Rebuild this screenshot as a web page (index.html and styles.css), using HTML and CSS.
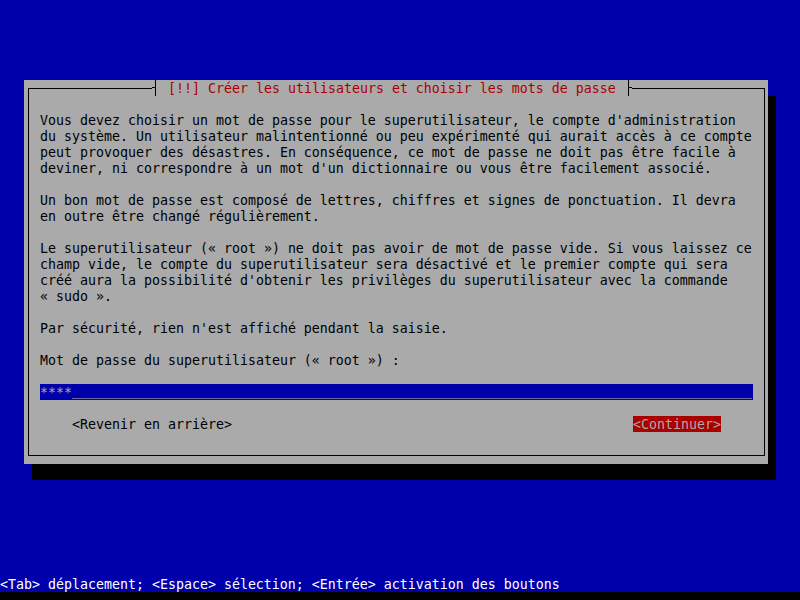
FILE: index.html
```html
<!DOCTYPE html>
<html>
    <head>
        <meta charset="UTF-8">
        <meta name="viewport" content="width=device-width, initial-scale=1.0">
        <title>Installation</title>
        <link rel="stylesheet" href="styles.css">
    </head>
    <body>
        <div id="screen">
            <div id="dialog">
                <fieldset id="frame">
                    <legend id="caption"><span class="tee tee-left"></span><span class="caption-text"> [!!] Créer les utilisateurs et choisir les mots de passe </span><span class="tee tee-right"></span></legend>
                    <p class="para">Vous devez choisir un mot de passe pour le superutilisateur, le compte d'administration
du système. Un utilisateur malintentionné ou peu expérimenté qui aurait accès à ce compte
peut provoquer des désastres. En conséquence, ce mot de passe ne doit pas être facile à
deviner, ni correspondre à un mot d'un dictionnaire ou vous être facilement associé.</p>
                    <p class="para">Un bon mot de passe est composé de lettres, chiffres et signes de ponctuation. Il devra
en outre être changé régulièrement.</p>
                    <p class="para">Le superutilisateur (« root ») ne doit pas avoir de mot de passe vide. Si vous laissez ce
champ vide, le compte du superutilisateur sera désactivé et le premier compte qui sera
créé aura la possibilité d'obtenir les privilèges du superutilisateur avec la commande
« sudo ».</p>
                    <p class="para">Par sécurité, rien n'est affiché pendant la saisie.</p>
                    <p class="para">Mot de passe du superutilisateur (« root ») :</p>
                    <div id="entry">****<span class="entry-fill">_____________________________________________________________________________________</span></div>
                    <div id="buttons">
                        <span class="btn">&lt;Revenir en arrière&gt;</span>
                        <span class="btn btn-active">&lt;Continuer&gt;</span>
                    </div>
                </fieldset>
            </div>
            <div id="helpline">&lt;Tab&gt; déplacement; &lt;Espace&gt; sélection; &lt;Entrée&gt; activation des boutons</div>
        </div>
    </body>
</html>
```

FILE: styles.css
```css
html, body {
    margin:0;
    padding:0;
}
body {
    background-color:#000;
    width:800px;
    height:600px;
    overflow:hidden;
    font-family:"DejaVu Sans Mono", monospace;
    font-size:13.29px;
    line-height:16px;
}
#screen {
    display:flex;
    flex-direction:column;
    height:592px;
    padding-top:80px;
    box-sizing:border-box;
    background-color:#0000aa;
}
#dialog {
    display:flex;
    flex-direction:column;
    width:744px;
    height:384px;
    margin-left:24px;
    padding:0 3px 8px 4px;
    box-sizing:border-box;
    background-color:#aaaaaa;
    box-shadow:8px 16px 0 #000;
    color:#000;
}
#frame {
    flex:1;
    margin:0;
    min-width:0;
    padding:16px 11px 0 11px;
    border:1px solid #000;
}
#caption {
    display:flex;
    padding:0;
    margin-left:112px;
    height:16px;
}
.tee {
    display:block;
    width:8px;
    height:16px;
}
.tee-left {
    background:
        linear-gradient(#000, #000) 3px 0 / 1px 16px no-repeat,
        linear-gradient(#000, #000) 0 7px / 3px 1px no-repeat;
}
.tee-right {
    background:
        linear-gradient(#000, #000) 4px 0 / 1px 16px no-repeat,
        linear-gradient(#000, #000) 4px 7px / 4px 1px no-repeat;
}
.caption-text {
    display:block;
    height:16px;
    padding-top:1px;
    box-sizing:border-box;
    white-space:pre;
    color:#aa0000;
}
.para {
    margin:0 0 15px 0;
    padding-top:1px;
    white-space:pre;
}
#entry {
    height:16px;
    padding-top:1px;
    box-sizing:border-box;
    background-color:#0000aa;
    color:#aaaaaa;
    white-space:pre;
}
.entry-fill {
    vertical-align:2px;
    line-height:10px;
}
#buttons {
    display:flex;
    justify-content:space-between;
    margin-top:16px;
    padding:0 32px;
}
.btn {
    display:block;
    height:16px;
    padding-top:1px;
    box-sizing:border-box;
    white-space:pre;
}
.btn-active {
    background-color:#aa0000;
    color:#aaaaaa;
}
#helpline {
    margin-top:auto;
    height:16px;
    padding-top:1px;
    box-sizing:border-box;
    color:#ffffff;
    white-space:pre;
}
```
